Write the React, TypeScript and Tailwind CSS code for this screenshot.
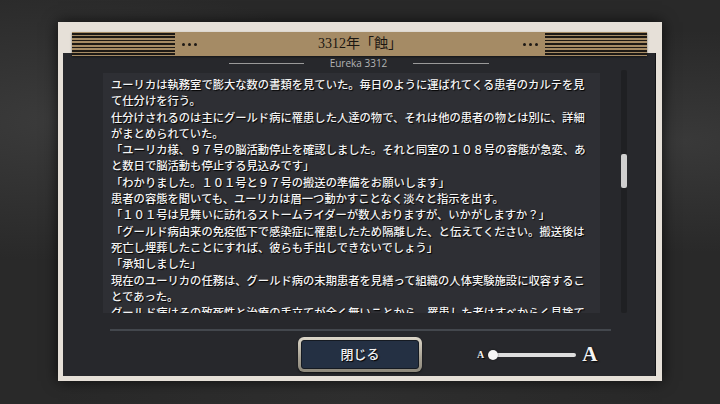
import React from "react";

const lines = [
  "ユーリカは執務室で膨大な数の書類を見ていた。毎日のように運ばれてくる患者のカルテを見",
  "て仕分けを行う。",
  "仕分けされるのは主にグールド病に罹患した人達の物で、それは他の患者の物とは別に、詳細",
  "がまとめられていた。",
  "「ユーリカ様、９７号の脳活動停止を確認しました。それと同室の１０８号の容態が急変、あ",
  "と数日で脳活動も停止する見込みです」",
  "「わかりました。１０１号と９７号の搬送の準備をお願いします」",
  "患者の容態を聞いても、ユーリカは眉一つ動かすことなく淡々と指示を出す。",
  "「１０１号は見舞いに訪れるストームライダーが数人おりますが、いかがしますか？」",
  "「グールド病由来の免疫低下で感染症に罹患したため隔離した、と伝えてください。搬送後は",
  "死亡し埋葬したことにすれば、彼らも手出しできないでしょう」",
  "「承知しました」",
  "現在のユーリカの任務は、グールド病の末期患者を見繕って組織の人体実験施設に収容するこ",
  "とであった。",
  "グールド病はその致死性と治療の手立てが全く無いことから、罹患した者はすべからく見捨て",
];

function Stripes({ w }: { w: string }) {
  return (
    <div className={`${w} h-full flex flex-col justify-between py-[1px]`}>
      {[0, 1, 2, 3, 4, 5, 6].map((i) => (
        <div key={i} className="h-[1.6px] bg-[#1d1915]" />
      ))}
    </div>
  );
}

function Dots() {
  return (
    <div className="flex gap-[3px]">
      <div className="w-[3px] h-[3px] rounded-full bg-[#1d1915]" />
      <div className="w-[3px] h-[3px] rounded-full bg-[#1d1915]" />
      <div className="w-[3px] h-[3px] rounded-full bg-[#1d1915]" />
    </div>
  );
}

export default function App() {
  return (
    <div className="w-[720px] h-[404px] overflow-hidden bg-[#292929] bg-[radial-gradient(ellipse_at_8%_30%,#3b3b3b_0%,transparent_35%),radial-gradient(ellipse_at_95%_35%,#393939_0%,transparent_30%),radial-gradient(ellipse_at_50%_100%,#2f2f2f_0%,transparent_60%)] pt-[22px] pl-[58px]">
      <div className="w-[604px] h-[359px] bg-[#e6e0d8] shadow-[0_0_14px_rgba(0,0,0,0.7)] pt-[10px] pl-[5px] pr-[6px] pb-[5px] flex flex-col">
        {/* title bar */}
        <div className="relative z-10 ml-[9px] mr-[9px] h-[24px] bg-[#a58b65] flex items-center shadow-[0_1px_2px_rgba(0,0,0,0.5)]">
          <Stripes w="w-[103px]" />
          <div className="ml-[7px]">
            <Dots />
          </div>
          <div className="flex-1 text-center text-[14px] leading-none text-[#1b1611] font-['Liberation_Serif','Noto_Sans_CJK_JP',serif]">
            3312年「蝕」
          </div>
          <div className="mr-[7px]">
            <Dots />
          </div>
          <Stripes w="w-[102px]" />
        </div>
        {/* dark panel */}
        <div className="-mt-[3px] h-[323px] bg-[#27282c] border-r border-[#121316] flex flex-col pt-[4px]">
          <div className="h-[12px] flex items-center justify-center">
            <div className="w-[75px] h-px bg-[#9a9a9a]" />
            <div className="mx-[26px] text-[10px] leading-none text-[#b4b4b4] font-['Open_Sans','Liberation_Sans',sans-serif]">
              Eureka 3312
            </div>
            <div className="w-[76px] h-px bg-[#9a9a9a]" />
          </div>
          <div className="flex items-start mt-[1px]">
            <div className="ml-[40px] mt-[3px] w-[497px] h-[240px] overflow-hidden bg-[#2e2f34] pl-[8px] pt-[4px]">
              {lines.map((l, i) => (
                <div
                  key={i}
                  className="whitespace-nowrap text-[11.3px] leading-[16.3px] font-medium text-[#f4f4f4] [text-shadow:1px_1px_1px_#000] font-['Liberation_Serif','Noto_Sans_CJK_JP',serif]"
                >
                  {l}
                </div>
              ))}
            </div>
            <div className="ml-[21px] w-[6px] h-[243px] bg-[#1f2023] rounded-[2px] pt-[84px]">
              <div className="w-[6px] h-[34px] bg-[#cfcfcf] rounded-[2px]" />
            </div>
          </div>
          <div className="ml-[47px] w-[501px] h-[2px] bg-[#43474d] mt-[16px]" />
          <div className="mt-[6px] flex items-center">
            <div className="ml-[235px] w-[124px] h-[35px] rounded-[6px] p-[3px] bg-[linear-gradient(to_bottom,#ddd7c9,#a7a193_60%,#8c877a)] shadow-[0_1px_2px_rgba(0,0,0,0.6)]">
              <div className="w-full h-full rounded-[3px] bg-[#243043] border border-[#151a22] flex items-center justify-center text-[13px] text-[#f2f2f2] font-medium [text-shadow:1px_1px_1px_#000] font-['Liberation_Serif','Noto_Sans_CJK_JP',serif]">
                閉じる
              </div>
            </div>
            <div className="ml-[55px] flex items-center">
              <span className="text-[10px] leading-none font-bold text-[#f0f0f0] [text-shadow:1px_1px_1px_#000] font-['Liberation_Serif',serif]">
                A
              </span>
              <div className="relative ml-[4px] w-[88px] h-[12px] flex items-center">
                <div className="ml-[5px] w-[83px] h-[4px] rounded-full bg-[#dedede]" />
                <div className="absolute left-0 top-[1px] w-[10px] h-[10px] rounded-full bg-[#f5f5f5] shadow-[0_0_2px_rgba(0,0,0,0.6)]" />
              </div>
              <span className="ml-[6px] text-[21px] leading-none font-bold text-[#f5f5f5] [text-shadow:1px_1px_2px_#000] font-['Liberation_Serif',serif]">
                A
              </span>
            </div>
          </div>
        </div>
      </div>
    </div>
  );
}
